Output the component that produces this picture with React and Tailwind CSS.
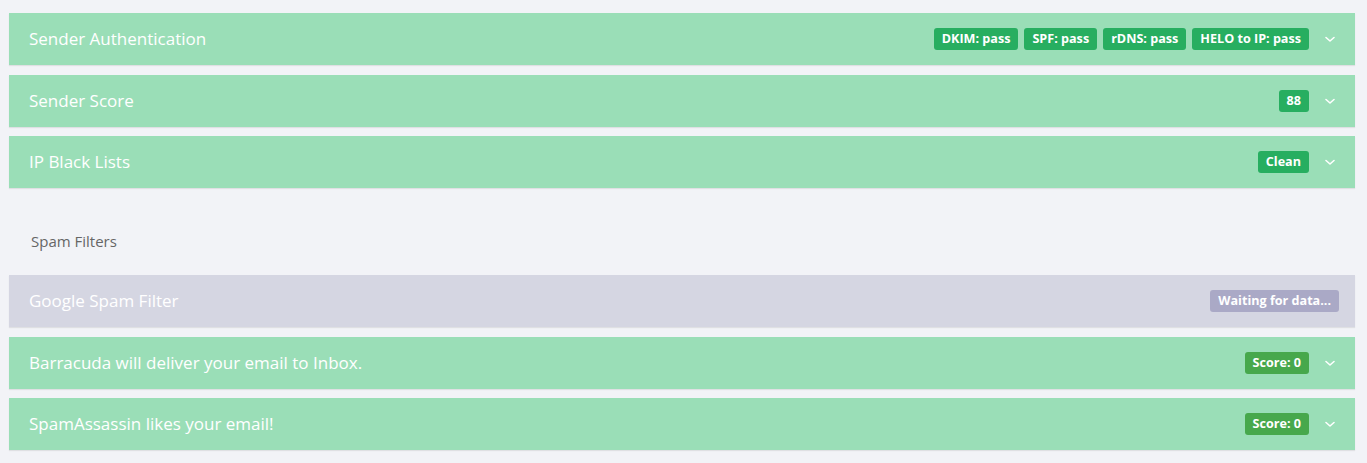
const Chevron = () => (
  <svg width="12" height="12" viewBox="0 0 12 12" className="ml-[15px] mr-[19px]">
    <path d="M2 4.5 L6 8 L10 4.5" fill="none" stroke="#ffffff" strokeWidth="1.6" strokeLinecap="round" strokeLinejoin="round" />
  </svg>
);

const Badge = ({ children, color }) => (
  <span className={`${color} text-white text-[12.6px] font-bold leading-none rounded-[3px] px-2 h-[22px] flex items-center`}>
    {children}
  </span>
);

const Row = ({ title, badges, badgeColor = "bg-[#27ae60]", gray, mt = "mt-[10px]" }) => (
  <div
    className={`${mt} h-[52px] flex items-center justify-between pl-5 shadow-[0_1px_1px_rgba(0,0,0,0.08)] ${
      gray ? "bg-[#d5d6e2]" : "bg-[#9adeb7]"
    }`}
  >
    <span className="text-white text-[17px]">{title}</span>
    <div className="flex items-center">
      <div className="flex gap-[6px]">
        {badges.map((b) => (
          <Badge key={b} color={gray ? "bg-[#aaa9c6]" : badgeColor}>
            {b}
          </Badge>
        ))}
      </div>
      {gray ? <div className="w-4" /> : <Chevron />}
    </div>
  </div>
);

export default function App() {
  return (
    <div
      className="min-h-[463px] bg-[#f2f3f7] pl-[9px] pr-[12px] pt-[3px]"
      style={{ fontFamily: '"Open Sans", "Noto Sans", sans-serif' }}
    >
      <Row title="Sender Authentication" badges={["DKIM: pass", "SPF: pass", "rDNS: pass", "HELO to IP: pass"]} />
      <Row title="Sender Score" badges={["88"]} />
      <Row title="IP Black Lists" badges={["Clean"]} mt="mt-[9px]" />
      <div className="pl-[22px] pt-[43px] pb-[23px] text-[15px] leading-[21px] text-[#666]">Spam Filters</div>
      <Row title="Google Spam Filter" badges={["Waiting for data..."]} gray mt="mt-0" />
      <Row title="Barracuda will deliver your email to Inbox." badges={["Score: 0"]} badgeColor="bg-[#47a84c]" />
      <Row title="SpamAssassin likes your email!" badges={["Score: 0"]} badgeColor="bg-[#47a84c]" mt="mt-[9px]" />
    </div>
  );
}
